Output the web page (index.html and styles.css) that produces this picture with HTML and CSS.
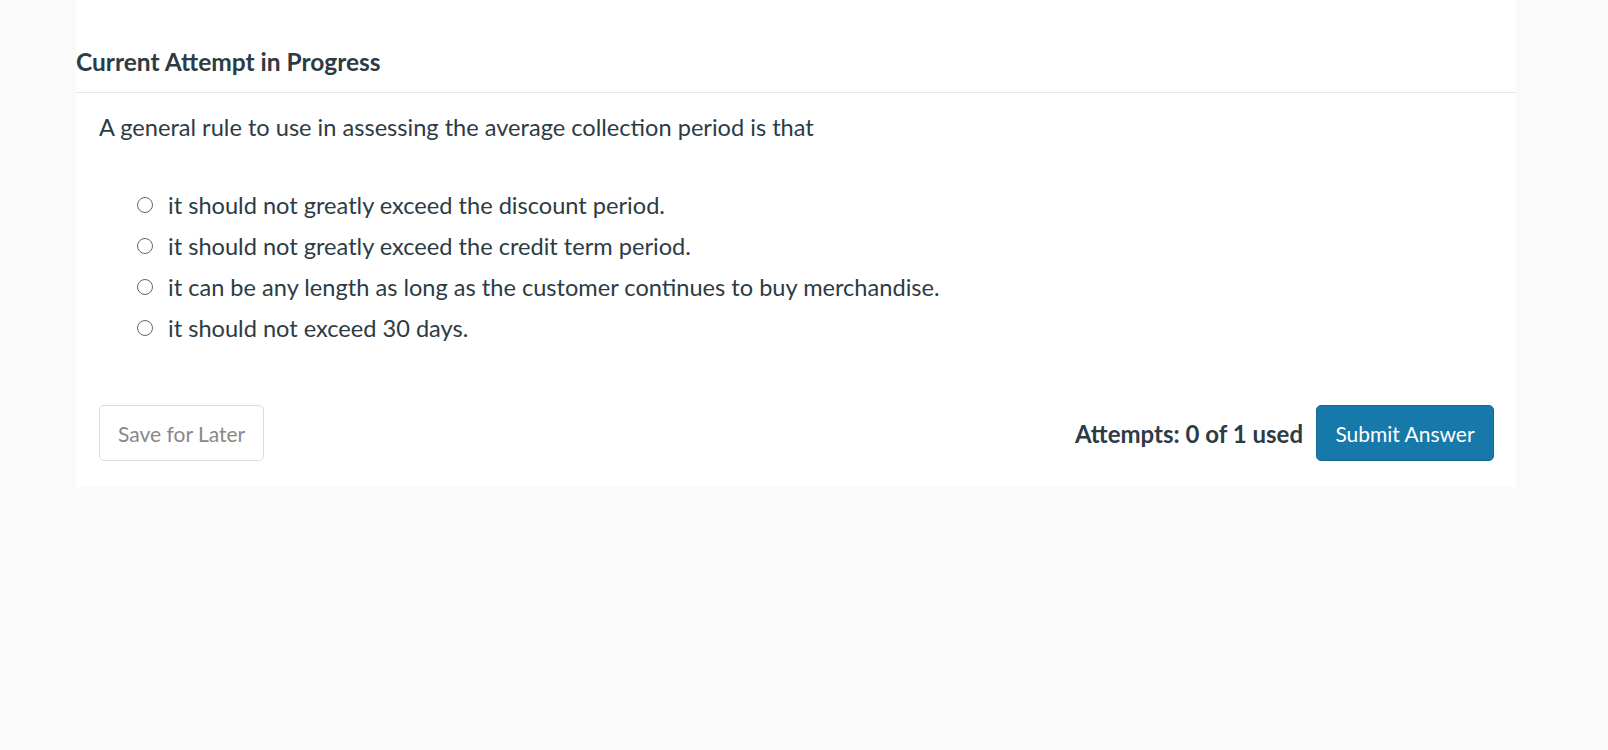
FILE: index.html
```html
<!DOCTYPE html>
<html>
<head>
<meta charset="utf-8">
<link rel="stylesheet" href="styles.css">
</head>
<body>
<div class="card">
  <div class="card-header">
    <h2 class="title">Current Attempt in Progress</h2>
  </div>
  <div class="card-body">
    <p class="question">A general rule to use in assessing the average collection period is that</p>
    <ul class="options">
      <li class="option"><span class="radio"></span><span>it should not greatly exceed the discount period.</span></li>
      <li class="option"><span class="radio"></span><span>it should not greatly exceed the credit term period.</span></li>
      <li class="option"><span class="radio"></span><span>it can be any length as long as the customer continues to buy merchandise.</span></li>
      <li class="option"><span class="radio"></span><span>it should not exceed 30 days.</span></li>
    </ul>
    <div class="actions">
      <button class="btn btn-secondary">Save for Later</button>
      <div class="actions-right">
        <span class="attempts">Attempts: 0 of 1 used</span>
        <button class="btn btn-primary">Submit Answer</button>
      </div>
    </div>
  </div>
</div>
</body>
</html>
```
FILE: styles.css
```css
html, body {
  margin: 0;
  padding: 0;
  background: #fafafa;
  font-family: Lato, "Noto Sans", sans-serif;
  color: #2d3b45;
}
.card {
  margin-left: 76px;
  width: 1440px;
  background: #ffffff;
}
.card-header {
  height: 92px;
  border-bottom: 1px solid #e8e8e8;
  display: flex;
  align-items: flex-start;
}
.title {
  margin: 0;
  padding-top: 47px;
  font-size: 24.5px;
  font-weight: 700;
  line-height: 30px;
}
.card-body {
  padding: 19px 22px 26px 23px;
}
.question {
  margin: 0;
  font-size: 23.6px;
  line-height: 30px;
}
.options {
  list-style: none;
  margin: 42px 0 0 0;
  padding: 0 0 0 38px;
}
.option {
  display: flex;
  align-items: center;
  height: 41px;
  font-size: 23.6px;
}
.radio {
  box-sizing: border-box;
  width: 16px;
  height: 16px;
  border: 1.3px solid #666;
  border-radius: 50%;
  margin-right: 15px;
  flex: none;
}
.actions {
  margin-top: 57px;
  display: flex;
  justify-content: space-between;
  align-items: center;
}
.actions-right {
  display: flex;
  align-items: center;
  gap: 13px;
}
.attempts {
  font-size: 24px;
  font-weight: 700;
}
.btn {
  font-family: Lato, "Noto Sans", sans-serif;
  font-size: 21px;
  height: 56px;
  padding: 0 18px;
  border-radius: 5px;
  white-space: nowrap;
}
.btn-secondary {
  background: #ffffff;
  border: 1px solid #dcdcdc;
  color: #888888;
  width: 165px;
}
.btn-primary {
  background: #1779a9;
  border: 1px solid #146a94;
  color: #ffffff;
  width: 178px;
}
```
